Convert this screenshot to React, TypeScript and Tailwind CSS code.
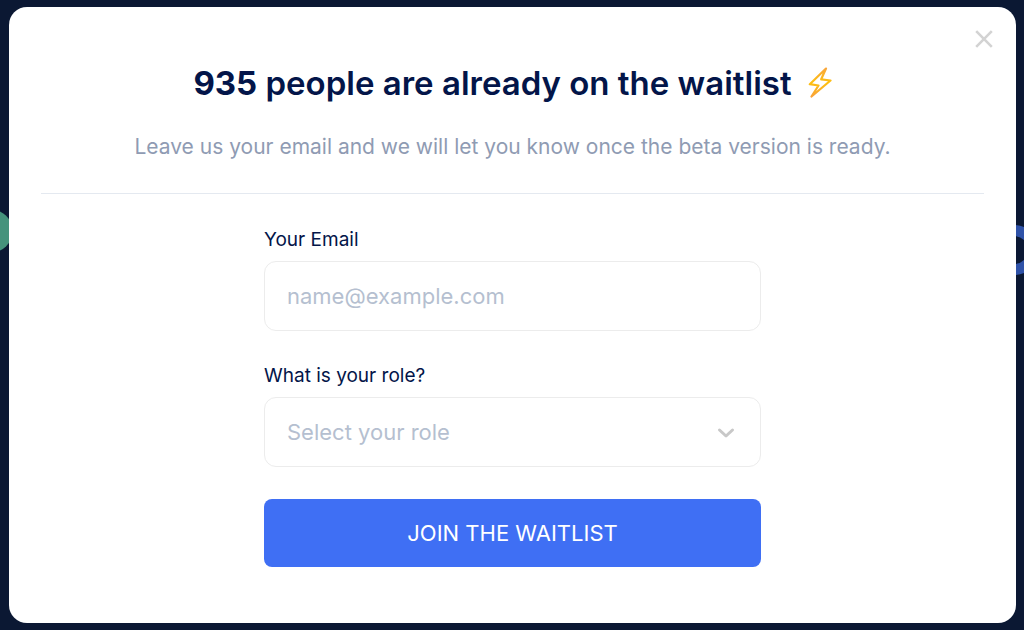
import { useState } from "react";

const roles = ["Designer", "Developer", "Product Manager", "Other"];

function Backdrop() {
  return (
    <div className="absolute inset-0 overflow-hidden" aria-hidden="true">
      <svg
        className="absolute left-0 top-[209px]"
        width="14"
        height="44"
        viewBox="0 0 14 44"
      >
        <circle cx="-9" cy="22" r="21.5" fill="#45937c" />
      </svg>
      <svg
        className="absolute right-0 top-[224px]"
        width="14"
        height="52"
        viewBox="0 0 14 52"
      >
        <circle cx="4" cy="26" r="19.5" fill="none" stroke="#2f52a8" strokeWidth="11" />
      </svg>
    </div>
  );
}

function Bolt() {
  return (
    <svg width="24" height="34" viewBox="0 0 24 34" fill="none" aria-hidden="true">
      <defs>
        <linearGradient id="bolt" x1="0" y1="0" x2="0" y2="1">
          <stop offset="0" stopColor="#f9a63a" />
          <stop offset="0.5" stopColor="#fdc010" />
          <stop offset="1" stopColor="#f9a33a" />
        </linearGradient>
      </defs>
      <path
        d="M18 2.5 1.8 18.2 10.5 19.5 3.5 30.5 22.5 14.5 13.2 13.3Z"
        stroke="url(#bolt)"
        strokeWidth="2.2"
        strokeLinejoin="round"
      />
    </svg>
  );
}

export default function App() {
  const [email, setEmail] = useState("");
  const [role, setRole] = useState("");

  return (
    <div className="relative flex min-h-screen bg-[#0b1833] pt-[7px] pr-2 pb-[7px] pl-[9px] font-['Inter',sans-serif]">
      <Backdrop />

      <main
        role="dialog"
        aria-labelledby="waitlist-title"
        className="relative flex-1 rounded-[18px] bg-white px-8 pt-14 pb-14"
      >
        <button
          type="button"
          aria-label="Close"
          className="absolute right-6 top-6 flex size-4 items-center justify-center text-[#d3d3d3]"
        >
          <svg className="size-[18px] shrink-0" viewBox="0 0 18 18" fill="none" stroke="currentColor" strokeWidth="2.6">
            <path d="M1.2 1.2 16.8 16.8M16.8 1.2 1.2 16.8" />
          </svg>
        </button>

        <header className="border-b border-[#e4e9f0] pb-[30px] text-center">
          <h1
            id="waitlist-title"
            className="flex items-center justify-center gap-4 text-[33px] leading-10 font-semibold text-[#031549]"
          >
            <span>
              <strong className="font-bold">935</strong> people are already on the waitlist
            </span>
            <Bolt />
          </h1>
          <p className="mt-7 text-[21px] leading-8 text-[#8f9bb3]">
            Leave us your email and we will let you know once the beta version is ready.
          </p>
        </header>

        <form
          className="mx-auto mt-8 flex max-w-[497px] flex-col"
          onSubmit={(e) => e.preventDefault()}
        >
          <label htmlFor="email" className="text-[19px] leading-7 text-[#031549]">
            Your Email
          </label>
          <input
            id="email"
            type="email"
            value={email}
            onChange={(e) => setEmail(e.target.value)}
            placeholder="name@example.com"
            className="mt-[7px] h-[70px] rounded-xl border border-[#ececec] bg-white px-[22px] text-[22px] text-[#031549] outline-none placeholder:text-[#b5bfd0]"
          />

          <label htmlFor="role" className="mt-[31px] text-[19px] leading-7 text-[#031549]">
            What is your role?
          </label>
          <div className="relative mt-[7px]">
            <select
              id="role"
              value={role}
              onChange={(e) => setRole(e.target.value)}
              className="h-[70px] w-full appearance-none rounded-xl border border-[#ececec] bg-white px-[22px] text-[22px] text-[#b5bfd0] outline-none"
            >
              <option value="">Select your role</option>
              {roles.map((r) => (
                <option key={r}>{r}</option>
              ))}
            </select>
            <svg
              className="pointer-events-none absolute right-[26px] top-[30px]"
              width="18"
              height="12"
              viewBox="0 0 18 12"
              fill="none"
              stroke="#c8c8c8"
              strokeWidth="3"
              strokeLinecap="round"
              strokeLinejoin="round"
            >
              <path d="M2.5 3 9 9 15.5 3" />
            </svg>
          </div>

          <button
            type="submit"
            className="mt-8 h-[68px] rounded-lg bg-[#3f6ff4] text-[22px] text-white"
          >
            JOIN THE WAITLIST
          </button>
        </form>
      </main>
    </div>
  );
}
